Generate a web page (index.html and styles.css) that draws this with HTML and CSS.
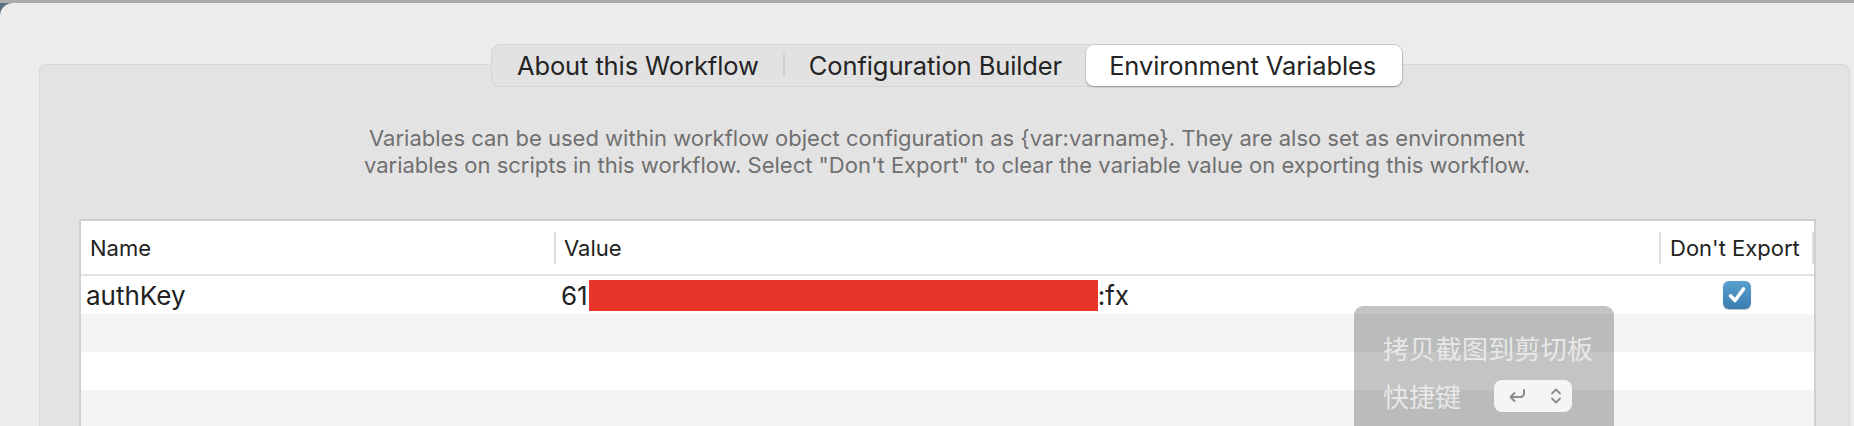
FILE: index.html
```html
<!DOCTYPE html>
<html lang="en">
<head>
<meta charset="utf-8">
<title>Environment Variables</title>
<link rel="stylesheet" href="styles.css">
</head>
<body>
<div class="topstrip"></div>
<div class="window">
  <div class="tabview">
    <div class="tabs-row">
      <div class="segmented">
        <div class="seg">About this Workflow</div>
        <div class="seg-sep"></div>
        <div class="seg">Configuration Builder</div>
        <div class="seg seg-active">Environment Variables</div>
      </div>
    </div>
    <p class="desc">Variables can be used within workflow object configuration as {var:varname}. They are also set as environment<br>variables on scripts in this workflow. Select "Don't Export" to clear the variable value on exporting this workflow.</p>
    <div class="table">
      <div class="thead">
        <div class="th th-name">Name</div>
        <div class="th-sep"></div>
        <div class="th th-value">Value</div>
        <div class="th-sep"></div>
        <div class="th th-export">Don't Export</div>
        <div class="th-sep"></div>
      </div>
      <div class="tbody">
        <div class="tr">
          <div class="td td-name">authKey</div>
          <div class="td td-value">61<span class="redact"></span>:fx</div>
          <div class="td td-export">
            <span class="checkbox">
              <svg width="28" height="28" viewBox="0 0 28 28"><path d="M7.5 14.8 L12 19.5 L20.5 8" fill="none" stroke="#fff" stroke-width="3.6" stroke-linecap="round" stroke-linejoin="round"/></svg>
            </span>
          </div>
        </div>
        <div class="tr tr-alt"></div>
        <div class="tr"></div>
        <div class="tr tr-alt"></div>
      </div>
    </div>
  </div>
</div>
<div class="hud">
  <div class="hud-title">拷贝截图到剪切板</div>
  <div class="hud-row">
    <span class="hud-label">快捷键</span>
    <span class="keybox">
      <svg class="ret" width="20" height="16" viewBox="0 0 20 16"><path d="M17 2 V5.5 A3.5 3.5 0 0 1 13.5 9 H3.5 M7.5 5 L3.5 9 L7.5 13" fill="none" stroke="#8c8c8c" stroke-width="2" stroke-linecap="round" stroke-linejoin="round"/></svg>
      <svg class="chev" width="12" height="18" viewBox="0 0 12 18"><path d="M2 6.5 L6 2.5 L10 6.5 M2 11.5 L6 15.5 L10 11.5" fill="none" stroke="#8c8c8c" stroke-width="1.8" stroke-linecap="round" stroke-linejoin="round"/></svg>
    </span>
  </div>
</div>
</body>
</html>
```
FILE: styles.css
```css
html, body {
  margin: 0;
  padding: 0;
}
body {
  width: 1854px;
  height: 426px;
  overflow: hidden;
  background: #5c6f7b;
  font-family: Inter, "Liberation Sans", "Noto Sans CJK SC", sans-serif;
  position: relative;
}
.topstrip {
  height: 3px;
  background: #ababab;
}
.window {
  height: 423px;
  background: #ececec;
  border-top-left-radius: 13px;
  padding: 61px 4px 0 39px;
  box-sizing: border-box;
}
.tabview {
  height: 380px;
  background: #e3e3e3;
  border: 1px solid #d8d8d8;
  border-radius: 7px;
  box-sizing: border-box;
}
.tabs-row {
  display: flex;
  justify-content: center;
  padding-left: 5px;
  margin-top: -21px;
}
.segmented {
  display: flex;
  align-items: center;
  height: 43px;
  box-sizing: border-box;
  background: #e2e2e2;
  border: 1px solid #d5d5d5;
  border-radius: 9px;
  padding: 0 0 0 1px;
}
.seg {
  font-size: 25.5px;
  letter-spacing: -0.1px;
  color: #242424;
  padding: 0 24px;
  height: 41px;
  line-height: 41px;
  white-space: nowrap;
}
.seg-sep {
  width: 2px;
  height: 23px;
  background: #cfcfcf;
}
.seg-active {
  background: #fff;
  border-radius: 8px;
  box-shadow: 0 1px 2px rgba(0,0,0,0.3), 0 0 0 0.5px rgba(0,0,0,0.08);
  padding: 0 26px 0 23px;
}
.desc {
  margin: 38px 0 0 5px;
  text-align: center;
  font-size: 22px;
  line-height: 27px;
  color: #707070;
}
.table {
  margin: 40px 33px 0 39px;
  background: #fff;
  border: 2px solid #cfcfcf;
  border-bottom: 0;
  height: 220px;
  overflow: hidden;
}
.thead {
  display: flex;
  align-items: center;
  height: 53px;
  border-bottom: 2px solid #e2e2e2;
}
.th {
  font-size: 22px;
  color: #222;
  box-sizing: border-box;
}
.th-name { width: 473px; padding-left: 9px; }
.th-value { width: 1103px; padding-left: 8px; }
.th-export { width: 151px; padding-left: 9px; }
.th-sep {
  width: 2px;
  height: 32px;
  background: #dedede;
}
.tr {
  display: flex;
  height: 38px;
  align-items: center;
}
.tr-alt { background: #f3f4f4; }
.td {
  font-size: 26px;
  color: #222;
  box-sizing: border-box;
  white-space: nowrap;
}
.td-name { width: 475px; padding-left: 5px; }
.td-value { width: 1105px; padding-left: 5px; display: flex; align-items: center; }
.td-export { width: 153px; display: flex; justify-content: center; }
.redact {
  display: inline-block;
  width: 509px;
  height: 31px;
  background: #e8352a;
  margin-left: 1px;
}
.checkbox {
  display: block;
  width: 28px;
  height: 28px;
  border-radius: 6px;
  background: linear-gradient(#5aa0cf, #3a7db1);
  box-shadow: 0 0.5px 1px rgba(0,0,0,0.25);
  margin-left: -2px;
}
.checkbox svg { display: block; }
.hud {
  position: absolute;
  left: 1354px;
  top: 306px;
  width: 260px;
  height: 140px;
  background: rgba(0,0,0,0.23);
  border-radius: 9px;
  padding: 25px 0 0 29px;
  box-sizing: border-box;
  font-family: "Noto Sans CJK SC", sans-serif;
  color: #e8e8e8;
}
.hud-title {
  font-size: 26px;
  line-height: 34px;
  letter-spacing: 0.3px;
}
.hud-row {
  display: flex;
  align-items: center;
  margin-top: 15px;
  height: 32px;
}
.hud-label {
  font-size: 26px;
  line-height: 32px;
  width: 111px;
}
.keybox {
  display: flex;
  align-items: center;
  width: 78px;
  height: 32px;
  background: #f5f5f5;
  border-radius: 8px;
  padding-left: 13px;
  box-sizing: border-box;
}
.keybox .chev { margin-left: 23px; }
```
